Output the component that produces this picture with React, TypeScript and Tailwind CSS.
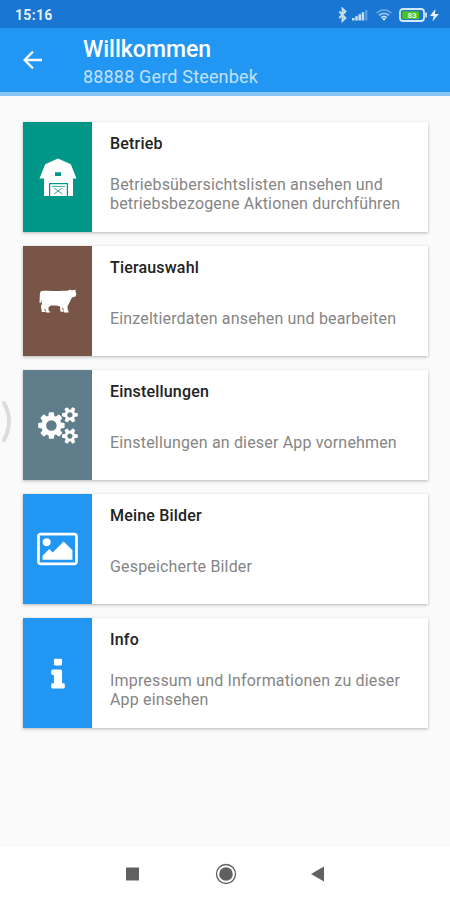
import type {ReactNode} from 'react'

type Entry = {
  title: string
  text: string
  color: string
  icon: ReactNode
}

function BarnIcon() {
  return (
    <svg viewBox="0 0 38 39" className="w-[38px] h-[39px]" aria-hidden="true">
      <path
        fill="#fff"
        fillRule="evenodd"
        d="M19 0.5L31.8 6.3L37.5 20.5H34V38H29V25H10V38H5V20.5H0.5L6.2 6.3ZM16 14.2V18H22V14.2Z"
      />
      <path fill="#fff" d="M11.2 26.2H27.8V38H11.2Z" />
      <path
        fill="none"
        stroke="#009688"
        strokeWidth="0.8"
        d="M13 28.4H26M15 30L23.4 36M23.4 30L15 36"
      />
    </svg>
  )
}

function CowIcon() {
  return (
    <svg viewBox="0 0 38 24" className="w-[38px] h-6" fill="#fff" aria-hidden="true">
      <path d="M3 2C9 1.2 15 2.3 21 1.9C25 1.7 27.2 1.6 29.5 1.4L31 .4L32 1.3L35.3 1L36.8 .4L36.4 2.2L37.4 5.2L36.4 7.6L33 8.6L31.4 11.5L29.8 15L28.4 17.4L28.8 20.8L29.8 23.4H25L24.5 20L23.6 18.2L23.2 20L24.4 21.4V22.8H21.6L20.8 17.3C17.3 16.4 14.5 17 11.6 16.6L9.4 18.4L9.6 21L11.3 23.4H6.9L6.6 20.8L5.6 19.4L5.5 21L6.5 23H2.8L2 17.5L2.9 14.4L2.1 10.5L1.7 14L.5 13.8L.9 4.8C1 3.2 1.8 2.2 3 2Z" />
    </svg>
  )
}

function CogsIcon() {
  return (
    <svg viewBox="0 0 1920 1792" className="w-10 h-[37px]" fill="#fff" aria-hidden="true">
      <path d="M896 896q0-106-75-181t-181-75-181 75-75 181 75 181 181 75 181-75 75-181zm768 512q0-52-38-90t-90-38-90 38-38 90q0 53 37.5 90.5t90.5 37.5 90.5-37.5 37.5-90.5zm0-1024q0-52-38-90t-90-38-90 38-38 90q0 53 37.5 90.5t90.5 37.5 90.5-37.5 37.5-90.5zm-384 421v185q0 10-7 19.5t-16 10.5l-155 24q-11 35-32 76 34 48 90 115 7 11 7 20 0 12-7 19-23 30-82.5 89.5t-78.5 59.5q-11 0-21-7l-115-90q-37 19-77 31-11 108-23 155-7 24-30 24h-186q-11 0-20-7.5t-10-17.5l-23-153q-34-10-75-31l-118 89q-7 7-20 7-11 0-21-8-144-133-144-160 0-9 7-19 10-14 41-53t47-61q-23-44-35-82l-152-24q-10-1-17-9.5t-7-19.5v-185q0-10 7-19.5t16-10.5l155-24q11-35 32-76-34-48-90-115-7-11-7-20 0-12 7-20 22-30 82-89t79-59q11 0 21 7l115 90q34-18 77-32 11-108 23-154 7-24 30-24h186q11 0 20 7.5t10 17.5l23 153q34 10 75 31l118-89q8-7 20-7 11 0 21 8 144 133 144 160 0 8-7 19-12 16-42 54t-45 60q23 48 34 82l152 23q10 2 17 10.5t7 19.5zm640 533v140q0 16-149 31-12 27-30 52 51 113 51 138 0 4-4 7-122 71-124 71-8 0-46-47t-52-68q-20 2-30 2t-30-2q-14 21-52 68t-46 47q-2 0-124-71-4-3-4-7 0-25 51-138-18-25-30-52-149-15-149-31v-140q0-16 149-31 13-29 30-52-51-113-51-138 0-4 4-7 4-2 35-20t59-34 30-16q8 0 46 46.5t52 67.5q20-2 30-2t30 2q51-71 92-112l6-2q4 0 124 70 4 3 4 7 0 25-51 138 17 23 30 52 149 15 149 31zm0-1024v140q0 16-149 31-12 27-30 52 51 113 51 138 0 4-4 7-122 71-124 71-8 0-46-47t-52-68q-20 2-30 2t-30-2q-14 21-52 68t-46 47q-2 0-124-71-4-3-4-7 0-25 51-138-18-25-30-52-149-15-149-31v-140q0-16 149-31 13-29 30-52-51-113-51-138 0-4 4-7 4-2 35-20t59-34 30-16q8 0 46 46.5t52 67.5q20-2 30-2t30 2q51-71 92-112l6-2q4 0 124 70 4 3 4 7 0 25-51 138 17 23 30 52 149 15 149 31z" />
    </svg>
  )
}

function PictureIcon() {
  return (
    <svg viewBox="64 0 1920 1792" className="w-[41px] h-[38px]" fill="#fff" aria-hidden="true">
      <path d="M704 576q0 80-56 136t-136 56-136-56-56-136 56-136 136-56 136 56 56 136zm1024 384v448h-1408v-192l320-320 160 160 512-512zm96-704h-1600q-13 0-22.5 9.5t-9.5 22.5v1216q0 13 9.5 22.5t22.5 9.5h1600q13 0 22.5-9.5t9.5-22.5v-1216q0-13-9.5-22.5t-22.5-9.5zm160 32v1216q0 66-47 113t-113 47h-1600q-66 0-113-47t-47-113v-1216q0-66 47-113t113-47h1600q66 0 113 47t47 113z" />
    </svg>
  )
}

function InfoIcon() {
  return (
    <svg viewBox="0 0 640 1792" className="mt-1 w-[14px] h-[38px]" fill="#fff" aria-hidden="true">
      <path d="M640 1344v128q0 26-19 45t-45 19h-512q-26 0-45-19t-19-45v-128q0-26 19-45t45-19h64v-384h-64q-26 0-45-19t-19-45v-128q0-26 19-45t45-19h384q26 0 45 19t19 45v576h64q26 0 45 19t19 45zm-128-1152v192q0 26-19 45t-45 19h-256q-26 0-45-19t-19-45v-192q0-26 19-45t45-19h256q26 0 45 19t19 45z" />
    </svg>
  )
}

const entries: Entry[] = [
  {
    title: 'Betrieb',
    text: 'Betriebsübersichtslisten ansehen und betriebsbezogene Aktionen durchführen',
    color: 'bg-[#009688]',
    icon: <BarnIcon />,
  },
  {
    title: 'Tierauswahl',
    text: 'Einzeltierdaten ansehen und bearbeiten',
    color: 'bg-[#795548]',
    icon: <CowIcon />,
  },
  {
    title: 'Einstellungen',
    text: 'Einstellungen an dieser App vornehmen',
    color: 'bg-[#607d8b]',
    icon: <CogsIcon />,
  },
  {
    title: 'Meine Bilder',
    text: 'Gespeicherte Bilder',
    color: 'bg-[#2196f3]',
    icon: <PictureIcon />,
  },
  {
    title: 'Info',
    text: 'Impressum und Informationen zu dieser App einsehen',
    color: 'bg-[#2196f3]',
    icon: <InfoIcon />,
  },
]

function StatusBar() {
  return (
    <div className="flex h-7 items-center justify-between bg-[#1976d2] pl-[15px] pr-[9px] pt-px">
      <span className="text-[14px] font-bold leading-none tracking-[0.3px] text-[#e3effb]">15:16</span>
      <svg viewBox="0 0 104 16" className="h-4 w-[104px]" aria-hidden="true">
        <path
          d="M2.2 4.5L8.5 11L5.5 14V1.5L8.5 4.5L2.2 11"
          fill="none"
          stroke="#c5def5"
          strokeWidth="1.8"
        />
        <g fill="#c5def5">
          <path d="M15 11h2.6v2.5H15zM18.2 9.2h2.6v4.3h-2.6zM21.4 7.3H24v6.2h-2.6zM24.6 5.2h2.6v8.3h-2.6z" />
          <path d="M28 3h2.5v10.5H28z" opacity=".35" />
        </g>
        <g fill="none" stroke="#c5def5" strokeWidth="1.7">
          <path d="M39.6 6Q47-.2 54.4 6" opacity=".45" />
          <path d="M42 8.4Q47 4.2 52 8.4" opacity=".75" />
          <path d="M44.2 10.6Q47 8.4 49.8 10.6" />
        </g>
        <path d="M44.8 11.2h4.4L47 13.8z" fill="#e3effb" />
        <rect x="63" y="2" width="24" height="12" rx="3" fill="none" stroke="#d6e8f9" strokeWidth="1.8" />
        <path d="M88.2 5.6h1.7v5h-1.7z" fill="#d6e8f9" />
        <rect x="65.2" y="4.2" width="17" height="7.8" rx="1" fill="#4fc21f" />
        <text x="75" y="11" textAnchor="middle" fontSize="8" fontWeight="700" fill="#e9f9e2">
          83
        </text>
        <path d="M98.4 2L92.8 9H96.6l-1.2 5.6L102 7H98z" fill="#e3effb" />
      </svg>
    </div>
  )
}

function Header() {
  return (
    <header className="flex h-[68px] items-start border-b-4 border-[#85c5f8] bg-[#2196f3] pl-[23px]">
      <svg viewBox="0 0 20 20" className="mt-[22px] h-5 w-5 shrink-0" aria-hidden="true">
        <path d="M19 10H2M10 1.6L1.6 10L10 18.4" fill="none" stroke="#f3f9fe" strokeWidth="2.3" />
      </svg>
      <div className="ml-10 pt-2">
        <h1 className="text-[23px] font-medium leading-[27px] text-white">Willkommen</h1>
        <p className="text-[18px] leading-[27px] tracking-[0.17px] text-[#c3e1fb]">88888 Gerd Steenbek</p>
      </div>
    </header>
  )
}

function EntryCard({title, text, color, icon}: Entry) {
  return (
    <li className="flex h-[110px] bg-white shadow-[0_1px_3px_rgba(0,0,0,0.28)]">
      <div className={`flex w-[69px] shrink-0 items-center justify-center ${color}`}>{icon}</div>
      <div className="flex flex-1 flex-col pl-[18px] pr-4 pt-3">
        <h2 className="text-[16px] font-medium leading-5 tracking-[0.18px] text-[#222]">{title}</h2>
        <div className="mt-[11px] flex h-[58px] items-center">
          <p className="text-[16px] leading-[19px] tracking-[0.17px] text-[#858585]">{text}</p>
        </div>
      </div>
    </li>
  )
}

export default function App() {
  return (
    <div className="relative flex h-[900px] w-[450px] flex-col overflow-hidden bg-[#fafafa] font-[Roboto,sans-serif]">
      <StatusBar />
      <Header />
      <main className="flex-1 pl-[23px] pr-[22px] pt-[26px]">
        <ul className="flex flex-col gap-[14px]">
          {entries.map((entry) => (
            <EntryCard key={entry.title} {...entry} />
          ))}
        </ul>
      </main>
      {/* back gesture handle */}
      <svg viewBox="0 0 12 44" className="absolute left-0 top-[400px] h-11 w-3" aria-hidden="true">
        <path d="M4 3Q14 21 4 40" fill="none" stroke="#dcdcdc" strokeWidth="4" strokeLinecap="round" />
      </svg>
      <nav className="flex h-[53px] items-center justify-center bg-white pr-px">
        <svg viewBox="0 0 200 22" className="h-[22px] w-[200px]" aria-hidden="true">
          <path d="M1 4.5h13v13H1z" fill="#606060" />
          <circle cx="101" cy="11" r="9.5" fill="none" stroke="#606060" strokeWidth="1.3" />
          <circle cx="101" cy="11" r="6.8" fill="#606060" />
          <path d="M199 3.5v15L186 11z" fill="#606060" />
        </svg>
      </nav>
    </div>
  )
}
